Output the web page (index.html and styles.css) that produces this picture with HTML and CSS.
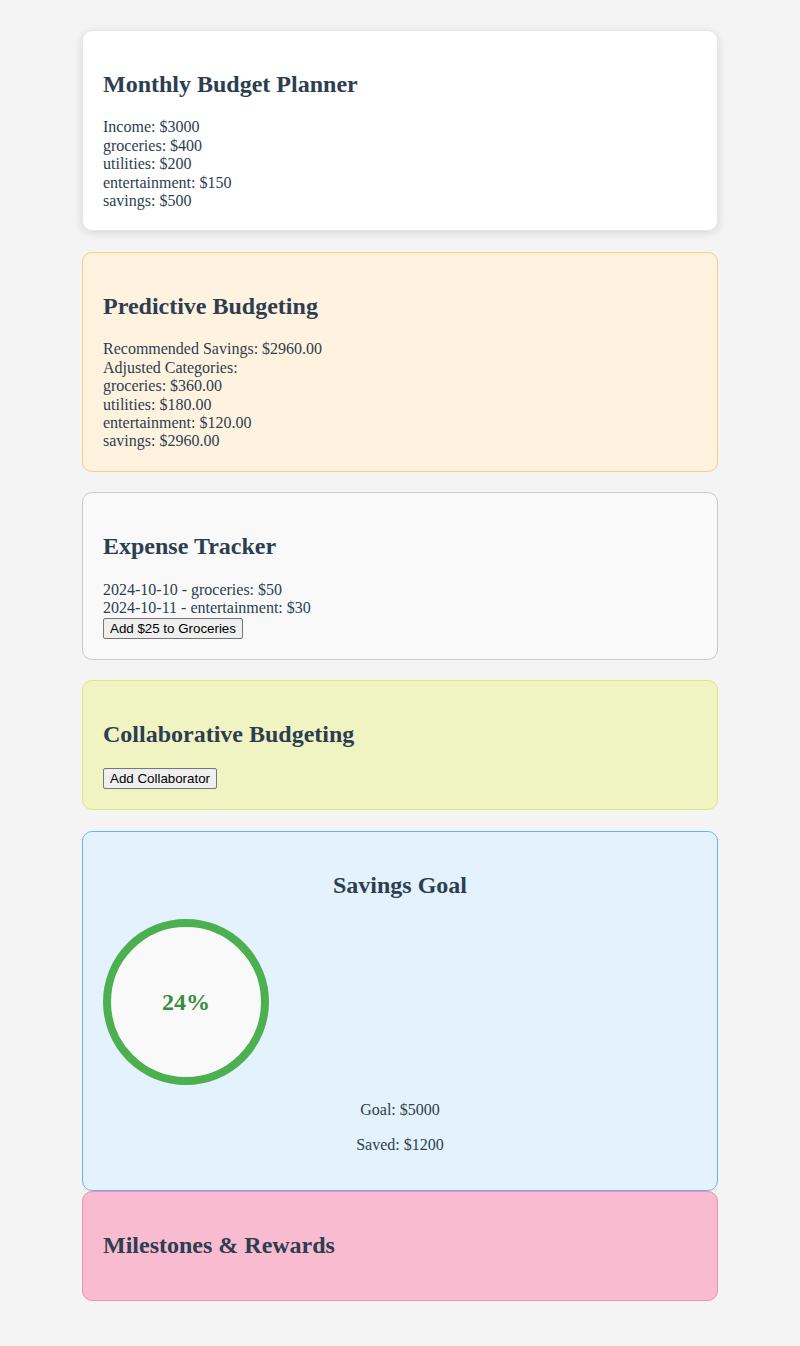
FILE: index.html
```html
<!DOCTYPE html>
<html lang="en">
<head>
<meta charset="utf-8">
<title>Budget Planner</title>
<link rel="stylesheet" href="styles.css">
</head>
<body>
<main class="container">
  <section class="card card-planner">
    <h2>Monthly Budget Planner</h2>
    <div>Income: $3000</div>
    <div>groceries: $400</div>
    <div>utilities: $200</div>
    <div>entertainment: $150</div>
    <div>savings: $500</div>
  </section>

  <section class="card card-predict">
    <h2>Predictive Budgeting</h2>
    <div>Recommended Savings: $2960.00</div>
    <div>Adjusted Categories:</div>
    <div>groceries: $360.00</div>
    <div>utilities: $180.00</div>
    <div>entertainment: $120.00</div>
    <div>savings: $2960.00</div>
  </section>

  <section class="card card-expense">
    <h2>Expense Tracker</h2>
    <div>2024-10-10 - groceries: $50</div>
    <div>2024-10-11 - entertainment: $30</div>
    <button class="btn">Add $25 to Groceries</button>
  </section>

  <section class="card card-collab">
    <h2>Collaborative Budgeting</h2>
    <button class="btn">Add Collaborator</button>
  </section>

  <section class="card card-goal">
    <h2>Savings Goal</h2>
    <div class="ring"><span class="ring-value">24%</span></div>
    <p>Goal: $5000</p>
    <p>Saved: $1200</p>
  </section>

  <section class="card card-milestones">
    <h2>Milestones &amp; Rewards</h2>
  </section>
</main>
</body>
</html>
```

FILE: styles.css
```css
html, body {
  margin: 0;
  padding: 0;
}

body {
  background: #f4f4f4;
  font-family: "Liberation Serif", "Times New Roman", serif;
  font-size: 16px;
  line-height: 18.4px;
  color: #2c3e50;
}

.container {
  width: 636px;
  margin: 0 auto;
  padding: 30px 0 46px;
}

.card {
  box-sizing: border-box;
  border: 1px solid #dddddd;
  border-radius: 10px;
  padding: 20px;
  margin-bottom: 20.5px;
}

.card h2 {
  font-size: 24px;
  line-height: 27.4px;
  font-weight: bold;
  margin: 20px 0;
}

.card-planner {
  background: #ffffff;
  border-color: #e6e6e6;
  box-shadow: 0 2px 10px rgba(0, 0, 0, 0.12);
}

.card-predict {
  background: #fff3e0;
  border-color: #ffcc80;
}

.card-expense {
  background: #f9f9f9;
  border-color: #cccccc;
}

.card-collab {
  background: #f0f4c3;
  border-color: #dce775;
}

.card-goal {
  background: #e3f2fd;
  border-color: #64b5f6;
  text-align: center;
  margin-bottom: 0;
}

.card-goal p {
  margin: 16px 0;
}

.card-milestones {
  background: #f8bbd0;
  border-color: #f48fb1;
}

.ring {
  width: 150px;
  height: 150px;
  border: 8px solid #4caf50;
  border-radius: 50%;
  background: #f9f9f9;
  display: flex;
  align-items: center;
  justify-content: center;
}

.ring-value {
  font-size: 24px;
  font-weight: bold;
  color: #388e3c;
}

.btn {
  font-family: "Liberation Sans", Arial, sans-serif;
  font-size: 13.333px;
  line-height: 15px;
  color: #000;
  background: #efefef;
  border: 1px solid #767676;
  border-radius: 2px;
  padding: 2px 6px;
  vertical-align: top;
}
```
